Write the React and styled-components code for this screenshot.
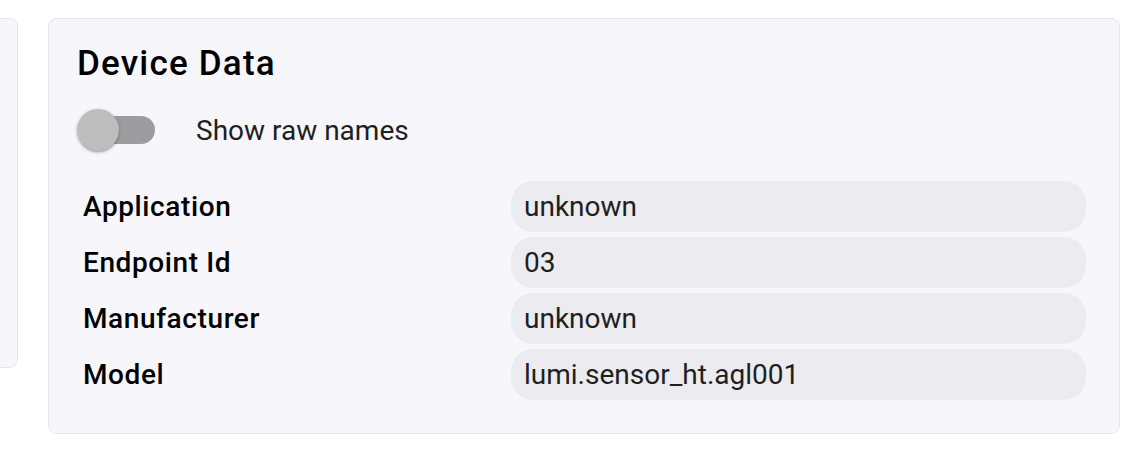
import React, { useState } from "react";
import styled, { createGlobalStyle } from "styled-components";

const GlobalStyle = createGlobalStyle`
  html, body {
    margin: 0;
    padding: 0;
    background: #ffffff;
    font-family: Roboto, "Liberation Sans", sans-serif;
    color: #1c1b1f;
  }
`;

const Page = styled.div`
  display: flex;
  align-items: flex-start;
  gap: 30px;
  padding-top: 18px;
  width: 1148px;
  height: 474px;
  box-sizing: border-box;
  overflow: hidden;
`;

const SideCard = styled.div`
  width: 18px;
  height: 350px;
  flex: none;
  box-sizing: border-box;
  background: #f7f7fb;
  border: 1px solid #e6e6ea;
  border-left: none;
  border-radius: 0 9px 9px 0;
`;

const Card = styled.section`
  width: 1072px;
  flex: none;
  box-sizing: border-box;
  background: #f7f7fb;
  border: 1px solid #e6e6ea;
  border-radius: 9px;
  padding: 25px 33px 33px 28px;
`;

const Title = styled.h2`
  margin: 0;
  font-size: 35px;
  line-height: 40px;
  font-weight: 500;
  letter-spacing: 1.2px;
  color: #000;
`;

const ToggleRow = styled.label`
  display: flex;
  align-items: center;
  height: 56px;
  margin-top: 18px;
  cursor: pointer;
`;

const Switch = styled.span`
  position: relative;
  display: inline-block;
  width: 119px;
  height: 56px;
  flex: none;
`;

const Track = styled.span`
  position: absolute;
  left: 6px;
  top: 14px;
  width: 72px;
  height: 28px;
  border-radius: 14px;
  background: ${(p) => (p.on ? "#8fb3e8" : "#9d9d9f")};
`;

const Knob = styled.span`
  position: absolute;
  top: 7px;
  left: ${(p) => (p.on ? "36px" : "0px")};
  width: 42px;
  height: 42px;
  border-radius: 50%;
  background: ${(p) => (p.on ? "#1976d2" : "#bdbdbd")};
  box-shadow: 0 2px 2px -1px rgba(0, 0, 0, 0.2), 0 1px 3px rgba(0, 0, 0, 0.14),
    0 1px 5px rgba(0, 0, 0, 0.12);
`;

const ToggleLabel = styled.span`
  font-size: 28px;
  color: #1f1f1f;
`;

const Table = styled.div`
  display: grid;
  grid-template-columns: 434px 1fr;
  grid-auto-rows: 51px;
  row-gap: 5px;
  margin-top: 23px;
`;

const Key = styled.div`
  display: flex;
  align-items: center;
  padding-left: 6px;
  font-size: 28px;
  font-weight: 500;
  letter-spacing: 0.6px;
  color: #000;
`;

const Value = styled.div`
  display: flex;
  align-items: center;
  padding: 0 13px;
  border-radius: 22px;
  background: #ebebf0;
  font-size: 28px;
  color: #1f1f1f;
`;

const rows = [
  ["Application", "unknown"],
  ["Endpoint Id", "03"],
  ["Manufacturer", "unknown"],
  ["Model", "lumi.sensor_ht.agl001"],
];

export default function App() {
  const [raw, setRaw] = useState(false);
  return (
    <>
      <GlobalStyle />
      <Page>
        <SideCard />
        <Card>
          <Title>Device Data</Title>
          <ToggleRow onClick={() => setRaw(!raw)}>
            <Switch>
              <Track on={raw} />
              <Knob on={raw} />
            </Switch>
            <ToggleLabel>Show raw names</ToggleLabel>
          </ToggleRow>
          <Table>
            {rows.map(([k, v]) => (
              <React.Fragment key={k}>
                <Key>{k}</Key>
                <Value>{v}</Value>
              </React.Fragment>
            ))}
          </Table>
        </Card>
      </Page>
    </>
  );
}
